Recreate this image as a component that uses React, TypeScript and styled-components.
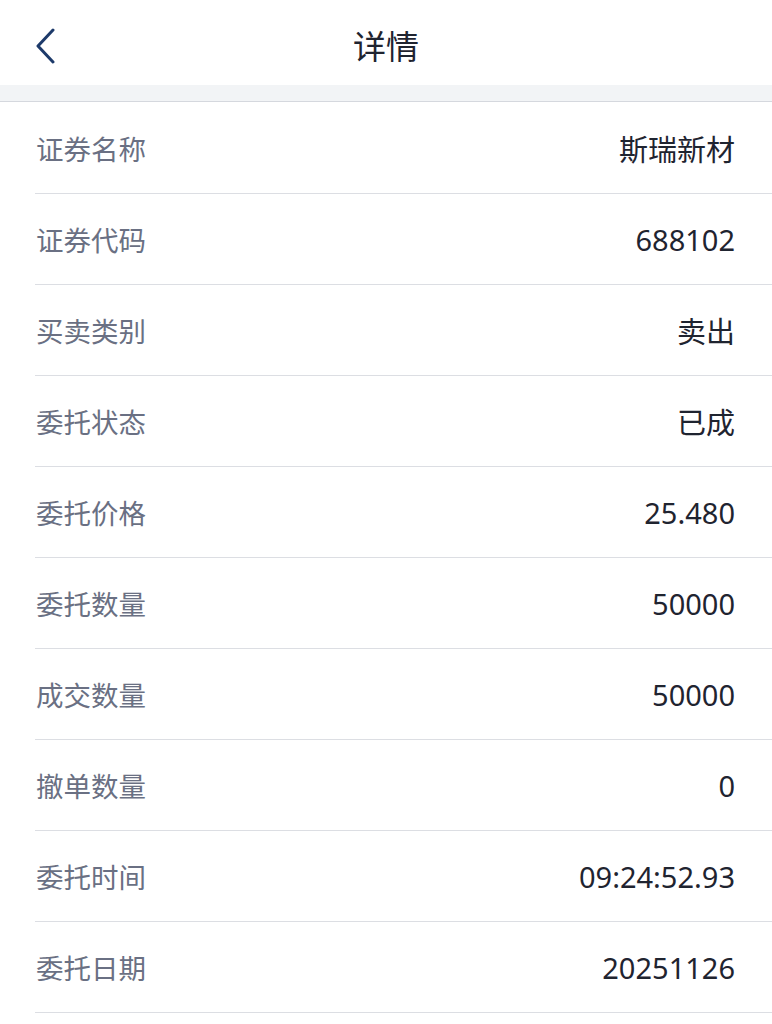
import React from "react";
import styled, { createGlobalStyle } from "styled-components";

const GlobalStyle = createGlobalStyle`
  html, body { margin: 0; padding: 0; background: #ffffff; }
  body { font-family: "Noto Sans", "Noto Sans CJK SC", sans-serif; }
`;

const Page = styled.div`
  width: 772px;
  min-height: 1024px;
  background: #ffffff;
  display: flex;
  flex-direction: column;
`;

const Header = styled.header`
  height: 85px;
  box-sizing: border-box;
  padding-top: 6px;
  display: grid;
  grid-template-columns: 120px 1fr 120px;
  align-items: center;
`;

const BackButton = styled.button`
  justify-self: start;
  margin-left: 33px;
  width: 26px;
  height: 40px;
  padding: 0;
  border: none;
  background: transparent;
  display: flex;
  align-items: center;
  justify-content: center;
`;

const Title = styled.h1`
  margin: 0;
  text-align: center;
  font-family: "Noto Sans CJK SC", sans-serif;
  font-size: 33px;
  font-weight: 400;
  color: #1f2430;
  line-height: 1;
`;

const Band = styled.div`
  height: 16px;
  background: #f2f4f6;
  border-bottom: 1px solid #d5d8de;
`;

const List = styled.div`
  display: flex;
  flex-direction: column;
  padding-top: 1px;
`;

const Row = styled.div`
  height: 90px;
  margin-left: 35px;
  padding-right: 37px;
  border-bottom: 1px solid #dcdee3;
  display: flex;
  align-items: center;
  justify-content: space-between;
`;

const Label = styled.span`
  font-family: "Noto Sans CJK SC", sans-serif;
  font-size: 27.5px;
  color: #6a7083;
  margin-left: 1px;
`;

const Value = styled.span`
  font-family: "Noto Sans", "Noto Sans CJK SC", sans-serif;
  font-size: 29px;
  color: #1f2430;
`;

const rows: [string, string][] = [
  ["证券名称", "斯瑞新材"],
  ["证券代码", "688102"],
  ["买卖类别", "卖出"],
  ["委托状态", "已成"],
  ["委托价格", "25.480"],
  ["委托数量", "50000"],
  ["成交数量", "50000"],
  ["撤单数量", "0"],
  ["委托时间", "09:24:52.93"],
  ["委托日期", "20251126"],
];

export default function App() {
  return (
    <Page>
      <GlobalStyle />
      <Header>
        <BackButton aria-label="返回">
          <svg width="22" height="36" viewBox="0 0 22 36" fill="none">
            <path
              d="M18 2 L3 18 L18 34"
              stroke="#1d3a6a"
              strokeWidth="3"
              strokeLinecap="round"
              strokeLinejoin="round"
            />
          </svg>
        </BackButton>
        <Title>详情</Title>
        <span />
      </Header>
      <Band />
      <List>
        {rows.map(([k, v]) => (
          <Row key={k}>
            <Label>{k}</Label>
            <Value>{v}</Value>
          </Row>
        ))}
      </List>
    </Page>
  );
}
